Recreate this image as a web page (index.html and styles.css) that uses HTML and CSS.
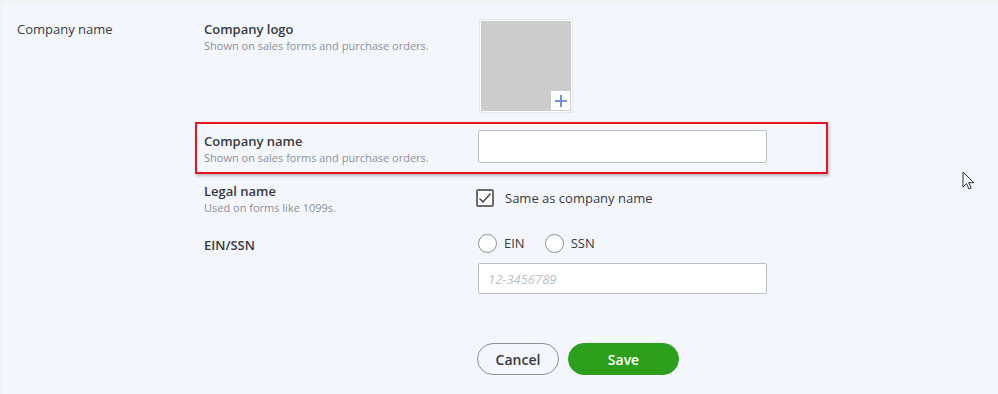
FILE: index.html
```html
<!DOCTYPE html>
<html lang="en">
<head>
<meta charset="utf-8">
<title>Company name</title>
<link rel="stylesheet" href="styles.css">
</head>
<body>
<div class="panel">
  <div class="section-title">Company name</div>
  <div class="fields">
    <div class="row row-logo">
      <div class="label">
        <div class="label-main">Company logo</div>
        <div class="label-sub">Shown on sales forms and purchase orders.</div>
      </div>
      <div class="control">
        <div class="logo-box">
          <div class="logo-fill"></div>
          <div class="logo-plus">
            <svg width="14" height="14" viewBox="0 0 14 14"><path d="M7 1v12M1 7h12" stroke="#7391d4" stroke-width="2" fill="none"/></svg>
          </div>
        </div>
      </div>
    </div>
    <div class="row row-name">
      <div class="highlight"></div>
      <div class="label">
        <div class="label-main">Company name</div>
        <div class="label-sub">Shown on sales forms and purchase orders.</div>
      </div>
      <div class="control">
        <div class="input"></div>
      </div>
    </div>
    <div class="row row-legal">
      <div class="label">
        <div class="label-main">Legal name</div>
        <div class="label-sub">Used on forms like 1099s.</div>
      </div>
      <div class="control">
        <div class="check-line">
          <span class="checkbox"><svg width="14" height="12" viewBox="0 0 14 12"><path d="M1.5 6.5l3.5 3.5 7.5-8.5" stroke="#393a3d" stroke-width="1.3" fill="none"/></svg></span>
          <span class="check-text">Same as company name</span>
        </div>
      </div>
    </div>
    <div class="row row-ein">
      <div class="label">
        <div class="label-main">EIN/SSN</div>
      </div>
      <div class="control">
        <div class="radios">
          <span class="radio"></span><span class="radio-text">EIN</span>
          <span class="radio radio-gap"></span><span class="radio-text">SSN</span>
        </div>
        <div class="input input-ein"><span class="placeholder">12-3456789</span></div>
      </div>
    </div>
    <div class="row row-buttons">
      <div class="label"></div>
      <div class="control buttons">
        <button class="btn btn-cancel">Cancel</button>
        <button class="btn btn-save">Save</button>
      </div>
    </div>
  </div>
  <svg class="cursor" width="14" height="20" viewBox="0 0 14 20"><path d="M1 1v15l3.5-3.5 2.5 5.5 2.2-1-2.5-5.3h5z" fill="#fff" stroke="#2c2d31" stroke-width="1"/></svg>
</div>
</body>
</html>
```

FILE: styles.css
```css
html, body {
  margin: 0;
  padding: 0;
}
body {
  background: #f1f2f4;
  font-family: "Open Sans", "Noto Sans", Arial, sans-serif;
  color: #393a3d;
  width: 998px;
  height: 394px;
  overflow: hidden;
}
.panel {
  position: relative;
  margin: 3px 0 0 2px;
  height: 391px;
  background: #f3f7fd;
  display: flex;
  padding-left: 15px;
  box-sizing: border-box;
}
.section-title {
  width: 187px;
  font-size: 13px;
  line-height: 20px;
  padding-top: 16px;
}
.fields {
  display: flex;
  flex-direction: column;
}
.row {
  position: relative;
  display: flex;
}
.label {
  width: 274px;
}
.label-main {
  font-size: 13px;
  line-height: 20px;
  font-weight: 600;
}
.label-sub {
  font-size: 11px;
  line-height: 14px;
  color: #8d9096;
}
.control {
  display: flex;
  flex-direction: column;
}
.row-logo {
  padding-top: 16px;
}
.logo-box {
  position: relative;
  width: 94px;
  height: 94px;
  box-sizing: border-box;
  border: 1px solid #e1e8f2;
  padding: 1px;
  margin-left: 1px;
  background: #fff;
}
.logo-fill {
  width: 100%;
  height: 100%;
  background: #cccccc;
}
.logo-plus {
  position: absolute;
  right: 2px;
  bottom: 2px;
  width: 19px;
  height: 19px;
  background: #fff;
  display: flex;
  align-items: center;
  justify-content: center;
}
.row-name {
  margin-top: 17px;
}
.row-name .label {
  padding-top: 1px;
}
.highlight {
  position: absolute;
  left: -9px;
  top: -8px;
  width: 633px;
  height: 52px;
  box-sizing: border-box;
  border: 2px solid #e8141b;
  box-shadow: 1px 2px 3px rgba(0, 0, 0, 0.25);
  pointer-events: none;
}
.input {
  width: 289px;
  height: 33px;
  box-sizing: border-box;
  background: #fff;
  border: 1px solid #babec5;
  border-radius: 2px;
}
.row-legal {
  margin-top: 16px;
}
.check-line {
  display: flex;
  align-items: center;
  padding-top: 7px;
  margin-left: -2px;
}
.checkbox {
  width: 18px;
  height: 18px;
  box-sizing: border-box;
  border: 2px solid #6b6c72;
  border-radius: 2px;
  display: flex;
  align-items: center;
  justify-content: center;
  background: #fff;
}
.check-text {
  margin-left: 11px;
  font-size: 13px;
  line-height: 20px;
}
.row-ein {
  margin-top: 17px;
}
.row-ein .label {
  padding-top: 3px;
}
.radios {
  display: flex;
  align-items: center;
  height: 22px;
}
.radio {
  width: 19px;
  height: 19px;
  box-sizing: border-box;
  border: 1px solid #8d9096;
  border-radius: 50%;
  background: #fff;
}
.radio-gap {
  margin-left: 20px;
}
.radio-text {
  margin-left: 7px;
  font-size: 13px;
  line-height: 20px;
}
.input-ein {
  margin-top: 9px;
  height: 31px;
  display: flex;
  align-items: center;
  padding-left: 9px;
}
.placeholder {
  font-size: 13px;
  font-style: italic;
  color: #babec5;
}
.row-buttons {
  margin-top: 49px;
}
.buttons {
  flex-direction: row;
  gap: 9px;
  margin-left: -1px;
}
.btn {
  height: 32px;
  border-radius: 16px;
  font-family: inherit;
  font-size: 14px;
  font-weight: 600;
  padding: 0;
  cursor: pointer;
}
.btn-cancel {
  width: 82px;
  background: transparent;
  border: 1px solid #8d9096;
  color: #393a3d;
}
.btn-save {
  width: 111px;
  background: #2ca01c;
  border: 1px solid #2ca01c;
  color: #fff;
}
.cursor {
  position: absolute;
  left: 960px;
  top: 168px;
}
```
